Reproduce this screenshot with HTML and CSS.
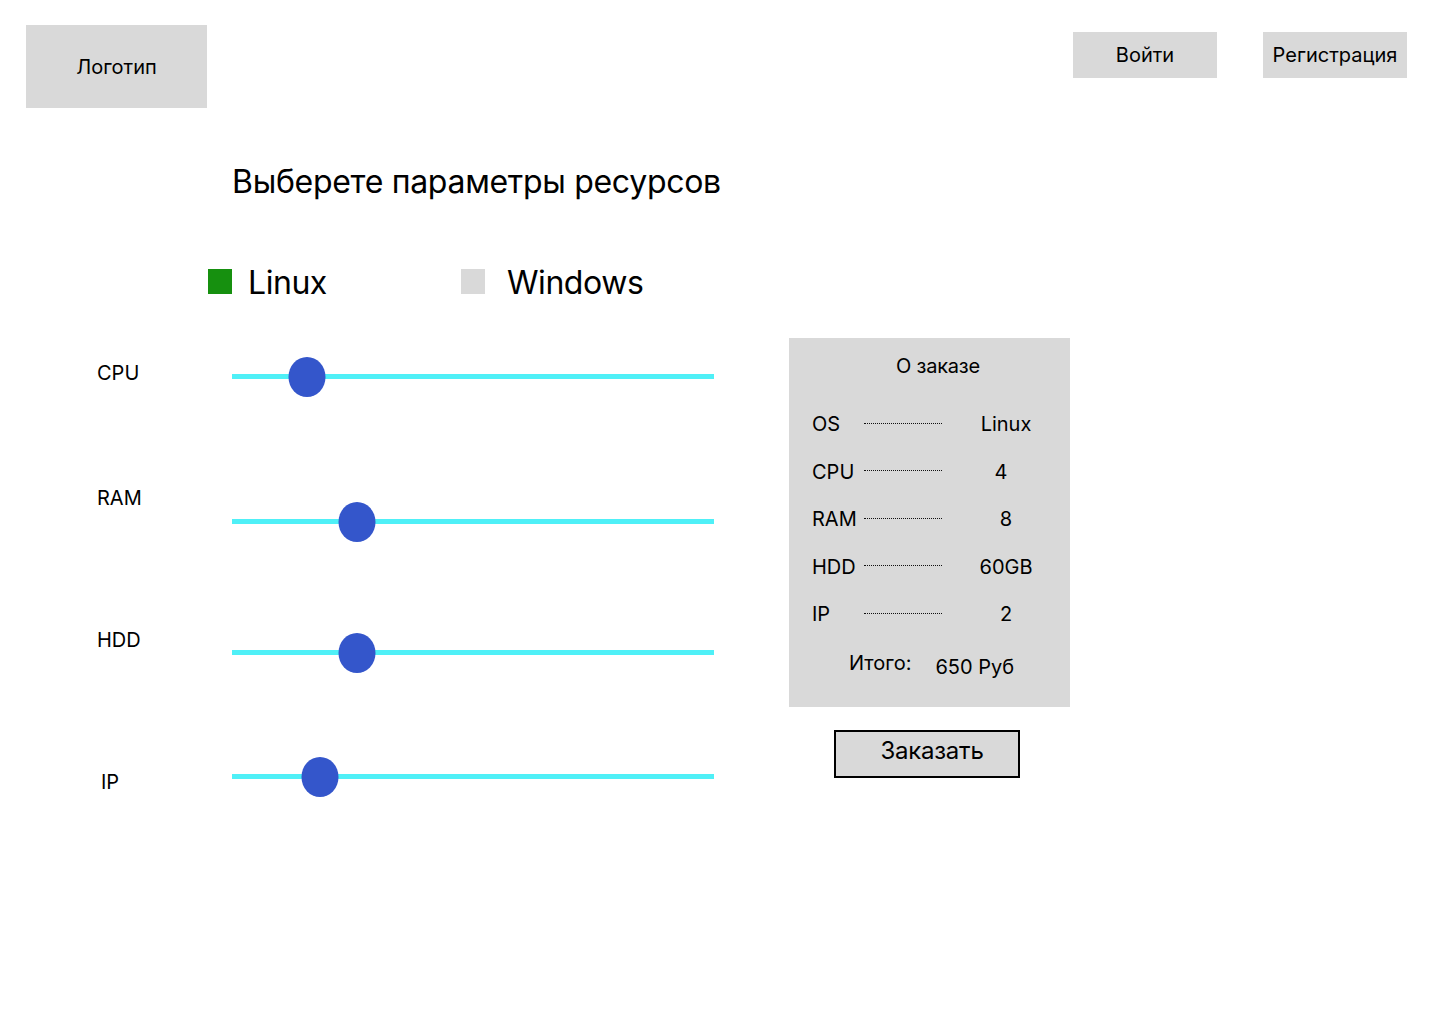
FILE: index.html
```html
<!DOCTYPE html>
<html lang="ru">
<head>
<meta charset="utf-8">
<title>Выбор ресурсов</title>
<link rel="stylesheet" href="styles.css">
</head>
<body>
<header class="header">
  <div class="logo">Логотип</div>
  <nav class="nav">
    <button class="nav-btn">Войти</button>
    <button class="nav-btn">Регистрация</button>
  </nav>
</header>

<h1 class="title">Выберете параметры ресурсов</h1>

<div class="os-select">
  <div class="os-option os-option--linux"><span class="os-box os-box--active"></span><span>Linux</span></div>
  <div class="os-option os-option--windows"><span class="os-box"></span><span>Windows</span></div>
</div>

<main class="main">
  <section class="sliders">
    <div class="slider-row slider-row--cpu">
      <span class="slider-label">CPU</span>
      <div class="track"><span class="thumb" style="left: 15.6%"></span></div>
    </div>
    <div class="slider-row slider-row--ram">
      <span class="slider-label">RAM</span>
      <div class="track"><span class="thumb" style="left: 25.9%"></span></div>
    </div>
    <div class="slider-row slider-row--hdd">
      <span class="slider-label">HDD</span>
      <div class="track"><span class="thumb" style="left: 25.9%"></span></div>
    </div>
    <div class="slider-row slider-row--ip">
      <span class="slider-label slider-label--ip">IP</span>
      <div class="track"><span class="thumb" style="left: 18.3%"></span></div>
    </div>
  </section>

  <aside class="order">
    <div class="order-box">
      <div class="order-title">О заказе</div>
      <div class="order-rows">
        <div class="order-row"><span>OS</span><span class="dots"></span><span class="order-val">Linux</span></div>
        <div class="order-row"><span>CPU</span><span class="dots"></span><span class="order-val order-val--l">4</span></div>
        <div class="order-row"><span>RAM</span><span class="dots"></span><span class="order-val">8</span></div>
        <div class="order-row"><span>HDD</span><span class="dots"></span><span class="order-val">60GB</span></div>
        <div class="order-row"><span>IP</span><span class="dots"></span><span class="order-val">2</span></div>
      </div>
      <div class="order-total"><span>Итого:</span><span class="order-sum">650 Руб</span></div>
    </div>
    <button class="order-btn">Заказать</button>
  </aside>
</main>
</body>
</html>
```

FILE: styles.css
```css
* { box-sizing: border-box; }

body {
  margin: 0;
  background: #fff;
  color: #000;
  font-family: Inter, "Noto Sans", "Liberation Sans", sans-serif;
  width: 1440px;
  min-height: 1024px;
}

.header {
  display: flex;
  justify-content: space-between;
  align-items: flex-start;
  padding: 25px 33px 0 26px;
}

.logo {
  width: 181px;
  height: 83px;
  background: #d9d9d9;
  display: flex;
  align-items: center;
  justify-content: center;
  font-size: 20px;
}

.nav {
  display: flex;
  gap: 46px;
  margin-top: 7px;
}

.nav-btn {
  width: 144px;
  height: 46px;
  border: none;
  background: #d9d9d9;
  font-family: inherit;
  font-size: 20px;
  color: #000;
  padding: 0;
}

.title {
  margin: 54px 0 0 232px;
  font-size: 32px;
  font-weight: 400;
  line-height: 40px;
  letter-spacing: -0.3px;
}

.os-select {
  display: flex;
  margin: 61px 0 0 208px;
  font-size: 32px;
  line-height: 40px;
  letter-spacing: -0.45px;
}

.os-option {
  display: flex;
  align-items: center;
  gap: 16px;
}

.os-option--linux { width: 253px; }
.os-option--windows { gap: 22px; }

.os-box {
  width: 24px;
  height: 25px;
  background: #d9d9d9;
  margin-top: -3px;
}

.os-box--active { background: #16900f; }

.main {
  display: flex;
  align-items: flex-start;
  margin-top: 35px;
  padding-left: 97px;
}

.sliders {
  width: 617px;
  padding-top: 18px;
  display: flex;
  flex-direction: column;
}

.slider-row {
  display: grid;
  grid-template-columns: 135px 482px;
  height: 40px;
  align-items: start;
}

.slider-row--ram { margin-top: 105px; }
.slider-row--hdd { margin-top: 91px; }
.slider-row--ip { margin-top: 84px; }

.slider-label {
  font-size: 20px;
  line-height: 24px;
}

.slider-row--cpu .slider-label { margin-top: 5px; }
.slider-row--ram .slider-label { margin-top: -15px; }
.slider-row--hdd .slider-label { margin-top: -4px; }
.slider-row--ip .slider-label { margin-top: 14px; padding-left: 4px; }

.track {
  position: relative;
  height: 5px;
  margin-top: 18px;
  background: #4ff0f7;
}

.thumb {
  position: absolute;
  top: 50%;
  width: 37px;
  height: 40px;
  border-radius: 50%;
  background: #3456cb;
  transform: translate(-50%, -50%);
}

.order {
  margin-left: 75px;
  width: 281px;
  display: flex;
  flex-direction: column;
  align-items: center;
}

.order-box {
  width: 281px;
  background: #d9d9d9;
  padding: 16px 0 28px 23px;
  font-size: 20px;
  line-height: 24px;
}

.order-title {
  text-align: center;
  padding-right: 6px;
  letter-spacing: -0.2px;
}

.order-rows {
  margin-top: 34px;
  display: flex;
  flex-direction: column;
  gap: 23.5px;
}

.order-row {
  display: grid;
  grid-template-columns: 52px 78px 1fr;
  align-items: center;
  height: 24px;
}

.dots {
  border-top: 1px dotted #111;
  height: 0;
  margin-top: -2px;
}

.order-val { text-align: center; }
.order-val--l { padding-right: 10px; }

.order-total {
  margin-top: 25px;
  display: flex;
  justify-content: center;
  gap: 24px;
  padding-right: 19px;
}

.order-sum { margin-top: 4px; }

.order-btn {
  margin-top: 23px;
  margin-right: 5px;
  width: 186px;
  height: 48px;
  border: 2px solid #000;
  background: #d9d9d9;
  font-family: inherit;
  font-size: 24px;
  letter-spacing: -0.25px;
  color: #000;
  padding: 0 0 7px 10px;
}
```
